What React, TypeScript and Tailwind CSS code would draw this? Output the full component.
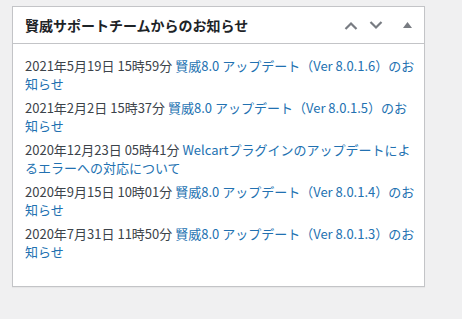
const items = [
  { date: "2021年5月19日 15時59分", title: "賢威8.0 アップデート（Ver 8.0.1.6）のお知らせ" },
  { date: "2021年2月2日 15時37分", title: "賢威8.0 アップデート（Ver 8.0.1.5）のお知らせ" },
  { date: "2020年12月23日 05時41分", title: "Welcartプラグインのアップデートによるエラーへの対応について" },
  { date: "2020年9月15日 10時01分", title: "賢威8.0 アップデート（Ver 8.0.1.4）のお知らせ" },
  { date: "2020年7月31日 11時50分", title: "賢威8.0 アップデート（Ver 8.0.1.3）のお知らせ" },
];

function Chevron({ up }: { up?: boolean }) {
  return (
    <svg width="14" height="9" viewBox="0 0 14 9" className="block">
      <path
        d={up ? "M1.5 8 L7 2.5 L12.5 8" : "M1.5 1 L7 6.5 L12.5 1"}
        fill="none"
        stroke="#787c82"
        strokeWidth="2.2"
      />
    </svg>
  );
}

export default function App() {
  return (
    <div
      className="min-h-[319px] w-[462px] bg-[#f0f0f1] pt-[6px] pl-[12px]"
      style={{ fontFamily: '"Noto Sans CJK JP", sans-serif' }}
    >
      <div className="w-[413px] border border-[#c3c4c7] bg-white shadow-[0_1px_1px_rgba(0,0,0,0.04)]">
        <div className="flex h-[37px] items-center border-b border-[#c3c4c7] pl-[12px] pr-[12px]">
          <h2 className="flex-1 text-[14px] font-bold text-[#1d2327]">賢威サポートチームからのお知らせ</h2>
          <div className="flex items-center">
            <Chevron up />
            <span className="ml-[11px]"><Chevron /></span>
            <span className="ml-[20px] block">
              <svg width="9" height="6" viewBox="0 0 9 6" className="block"><path d="M0 6 L4.5 0 L9 6 Z" fill="#787c82" /></svg>
            </span>
          </div>
        </div>
        <ul className="pl-[12px] pr-[6px] pt-[13px] pb-[25px] text-[13px] leading-[18px]">
          {items.map((it) => (
            <li key={it.date} className="mb-[6px] last:mb-0 text-[#3c434a]">
              {it.date}{" "}
              <a href="#" className="text-[#2271b1]">{it.title}</a>
            </li>
          ))}
        </ul>
      </div>
    </div>
  );
}
